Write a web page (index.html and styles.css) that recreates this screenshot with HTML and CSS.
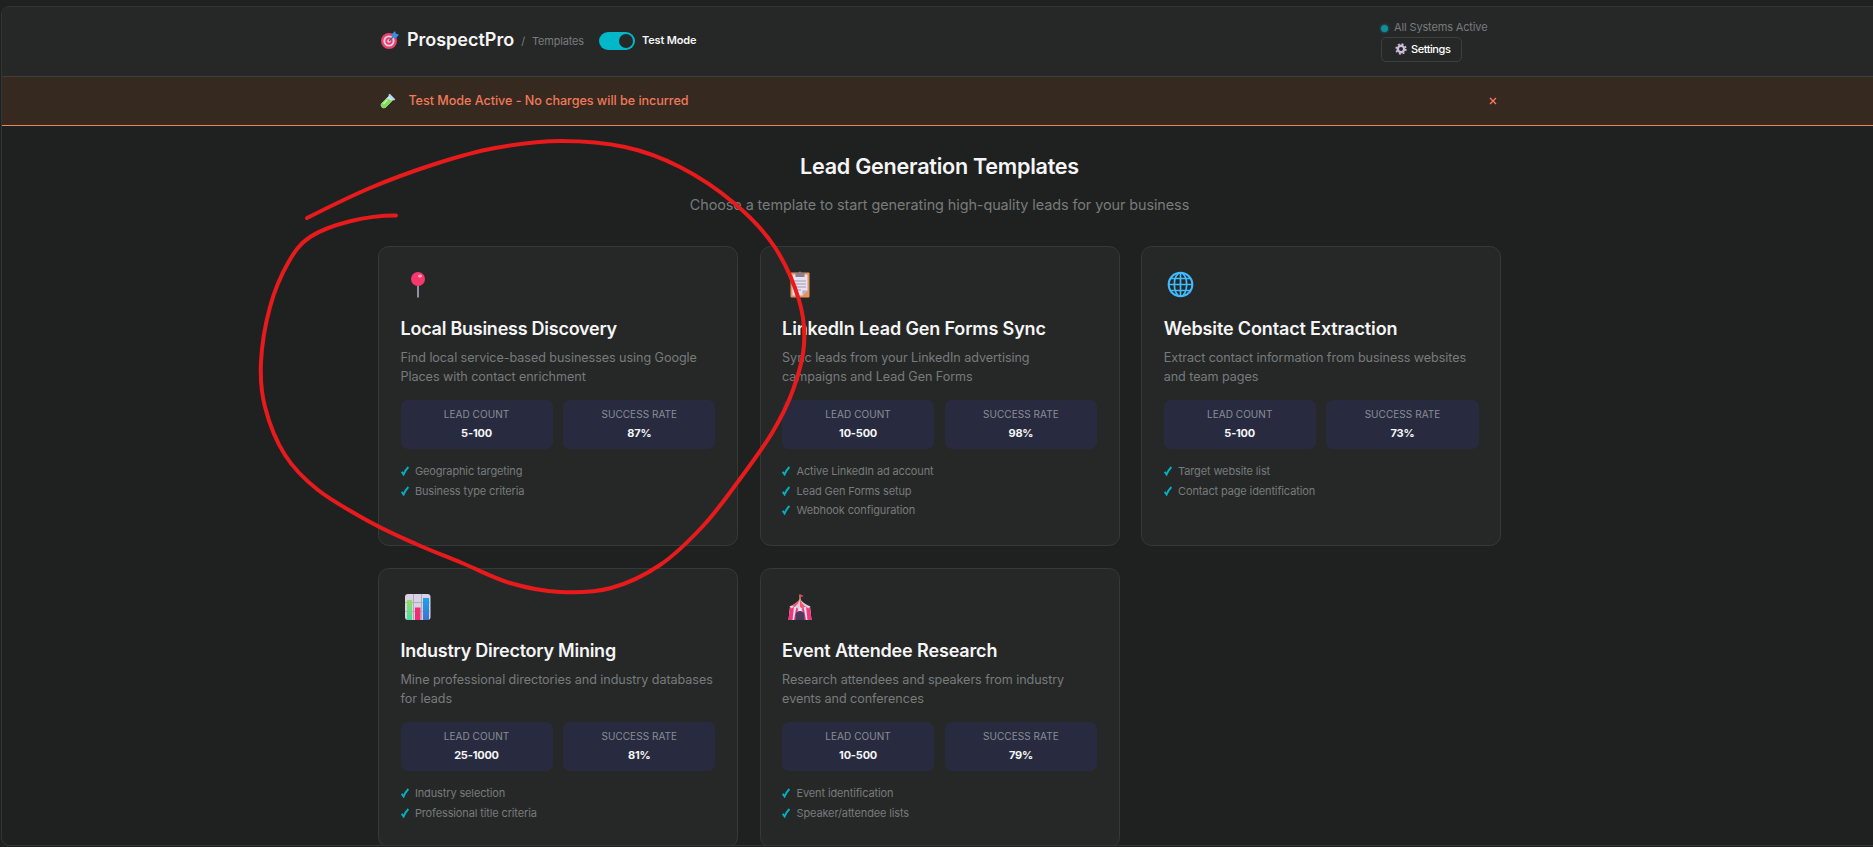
FILE: index.html
```html
<!DOCTYPE html>
<html lang="en">
<head>
<meta charset="utf-8">
<title>ProspectPro</title>
<link rel="stylesheet" href="styles.css">
</head>
<body>
<svg class="defs" width="0" height="0">
  <symbol id="check" viewBox="0 0 9 10"><path d="M.7 5.800 2.600 8.500C3.800 5.500 5.400 3 7.400 1" fill="none" stroke="#00b3c4" stroke-width="1.900"/></symbol>
</svg>
<div class="frame">
  <header class="header">
    <div class="container header-row">
      <div class="header-left">
        <svg class="logo" viewBox="0 0 18 18"><circle cx="8" cy="10" r="8" fill="#e8416f"/><circle cx="8" cy="10" r="5.600" fill="#e6cfe0"/><circle cx="8" cy="10" r="3.700" fill="#e8416f"/><circle cx="8" cy="10" r="1.800" fill="#e6cfe0"/><path d="M8 10 13 5" stroke="#50597a" stroke-width="1.200"/><path d="M11 6.500V3L14 0l.8 2.600L18 3.800 15 7Z" fill="#3391e6"/></svg>
        <span class="brand">ProspectPro</span>
        <span class="slash">/</span>
        <span class="crumb">Templates</span>
        <span class="toggle"><span class="knob"></span></span>
        <span class="mode">Test Mode</span>
      </div>
      <div class="header-right">
        <div class="status"><span class="dot"></span><span>All Systems Active</span></div>
        <button class="settings"><svg class="gear" viewBox="0 0 12 12"><circle cx="6" cy="6" r="3.200" fill="none" stroke="#cdbcd9" stroke-width="2.400"/><circle cx="6" cy="6" r="4.900" fill="none" stroke="#cdbcd9" stroke-width="1.600" stroke-dasharray="1.950 1.900"/></svg><span>Settings</span></button>
      </div>
    </div>
  </header>
  <div class="banner">
    <div class="container banner-row">
      <svg class="tube" viewBox="0 0 14 14"><path d="M8.200 1.600 12.400 5.800 5 13.200a2.900 2.900 0 0 1-4.200-4.200Z" fill="#c8e6f5"/><path d="M5.400 4.400 11.400 6.800 5 13.200a2.900 2.900 0 0 1-4.200-4.200Z" fill="#7edb5e"/><path d="M6.500 5.800 2.300 10" stroke="#d2f7a4" stroke-width="1.400"/><path d="M7.200 1 8.800-.2 14.200 5.200 13 6.800Z" fill="#b5dcf2"/></svg>
      <span class="banner-text">Test Mode Active - No charges will be incurred</span>
      <svg class="close" viewBox="0 0 8 8"><path d="m1 1 6 6M7 1 1 7" stroke="#ff7a59" stroke-width="1.300"/></svg>
    </div>
  </div>
  <main class="container main">
    <h1 class="heading">Lead Generation Templates</h1>
    <p class="sub">Choose a template to start generating high-quality leads for your business</p>
    <div class="grid">
      <article class="card">
        <svg class="icon" viewBox="0 0 36 36"><path d="M18 18v12.500" stroke="#9b8ca5" stroke-width="2"/><circle cx="18" cy="12" r="7" fill="#f8376c"/><ellipse cx="20" cy="9" rx="2" ry="1.500" fill="#ffa9c4"/></svg>
        <h2 class="title tight">Local Business Discovery</h2>
        <p class="desc">Find local service-based businesses using Google<br>Places with contact enrichment</p>
        <div class="stats">
          <div class="stat"><div class="label">LEAD COUNT</div><div class="value">5-100</div></div>
          <div class="stat"><div class="label">SUCCESS RATE</div><div class="value">87%</div></div>
        </div>
        <ul class="list">
          <li><svg class="check"><use href="#check"/></svg>Geographic targeting</li>
          <li><svg class="check"><use href="#check"/></svg>Business type criteria</li>
        </ul>
      </article>
      <article class="card">
        <svg class="icon" viewBox="0 0 36 36"><rect x="8.500" y="5.500" width="19" height="25" rx="1" fill="#e5935c"/><path d="M10.500 7.500h15v16l-5 5h-10Z" fill="#e8e1f0"/><path d="M25.500 23.500h-5v5Z" fill="#b9aac6"/><rect x="13.500" y="6" width="9" height="4" fill="#8b7f92"/><circle cx="18" cy="6" r="1.500" fill="#8b7f92"/><path d="M12 14h12M12 17h12M12 20h12M12 23h7" stroke="#a596ae"/></svg>
        <h2 class="title">LinkedIn Lead Gen Forms Sync</h2>
        <p class="desc">Sync leads from your LinkedIn advertising<br>campaigns and Lead Gen Forms</p>
        <div class="stats">
          <div class="stat"><div class="label">LEAD COUNT</div><div class="value">10-500</div></div>
          <div class="stat"><div class="label">SUCCESS RATE</div><div class="value">98%</div></div>
        </div>
        <ul class="list">
          <li><svg class="check"><use href="#check"/></svg>Active LinkedIn ad account</li>
          <li><svg class="check"><use href="#check"/></svg>Lead Gen Forms setup</li>
          <li><svg class="check"><use href="#check"/></svg>Webhook configuration</li>
        </ul>
      </article>
      <article class="card">
        <svg class="icon" viewBox="0 0 36 36"><g fill="none" stroke="#3fbcff" stroke-width="1.700"><circle cx="17.500" cy="17.500" r="11.800" stroke-width="2.100"/><ellipse cx="17.500" cy="17.500" rx="6.200" ry="11.700"/><path d="M17.500 6v23M6 17.500h23M8 11.500h19M8 23.500h19"/></g></svg>
        <h2 class="title">Website Contact Extraction</h2>
        <p class="desc">Extract contact information from business websites<br>and team pages</p>
        <div class="stats">
          <div class="stat"><div class="label">LEAD COUNT</div><div class="value">5-100</div></div>
          <div class="stat"><div class="label">SUCCESS RATE</div><div class="value">73%</div></div>
        </div>
        <ul class="list">
          <li><svg class="check"><use href="#check"/></svg>Target website list</li>
          <li><svg class="check"><use href="#check"/></svg>Contact page identification</li>
        </ul>
      </article>
      <article class="card">
        <svg class="icon" viewBox="0 0 36 36"><defs><linearGradient id="g" x2="0" y2="1"><stop stop-color="#8fdc62"/><stop offset="1" stop-color="#45dfa0"/></linearGradient><linearGradient id="b" x2="0" y2="1"><stop stop-color="#18a4f0"/><stop offset="1" stop-color="#3f73c8"/></linearGradient></defs><rect x="5" y="5" width="25.500" height="26" rx="3" fill="#dad2e2"/><path d="M5 13.500h25.500M5 22.500h25.500M13.500 5v26M21.500 5v26" stroke="#b5a9be"/><path d="M7 11h5v20H7Z" fill="url(#g)"/><path d="M15 18.500h5.500V31H15Z" fill="#ee2f72"/><path d="M23 9h6v22h-6Z" fill="url(#b)"/></svg>
        <h2 class="title tight">Industry Directory Mining</h2>
        <p class="desc">Mine professional directories and industry databases<br>for leads</p>
        <div class="stats">
          <div class="stat"><div class="label">LEAD COUNT</div><div class="value">25-1000</div></div>
          <div class="stat"><div class="label">SUCCESS RATE</div><div class="value">81%</div></div>
        </div>
        <ul class="list">
          <li><svg class="check"><use href="#check"/></svg>Industry selection</li>
          <li><svg class="check"><use href="#check"/></svg>Professional title criteria</li>
        </ul>
      </article>
      <article class="card">
        <svg class="icon" viewBox="0 0 36 36"><path d="M18 5.500v6" stroke="#f0a14d" stroke-width="1.300"/><path d="M18.500 5.500 22 7l-3.500 1.300Z" fill="#f0356d"/><path d="M8 17.500h20L29.500 31h-23Z" fill="#e7dff0"/><path d="M8 17.500h4L10.500 31h-4ZM28 17.500h-4L25.500 31h4ZM14.500 17.500h2L14 31h-2ZM21.500 17.500h-2L22 31h2Z" fill="#f0387a"/><path d="M18 10c2 3.500 6 5.500 10.500 7.500l-2 2-3-2-3 2L18 18l-2.500 1.500-3-2-3 2-2-2C12 15.500 16 13.500 18 10Z" fill="#d9cfdf"/><path d="M18 10c1 3 3 6 5.500 7.500l-3 2L18 18ZM18 10c-3 3.500-6 5.500-8 6.500l2.500 1.500c3-2 4.500-5 5.500-8Z" fill="#f8566f"/><path d="M13.500 31v-4.500a4.500 4.500 0 0 1 9 0V31Z" fill="#4c3c5c"/></svg>
        <h2 class="title">Event Attendee Research</h2>
        <p class="desc">Research attendees and speakers from industry<br>events and conferences</p>
        <div class="stats">
          <div class="stat"><div class="label">LEAD COUNT</div><div class="value">10-500</div></div>
          <div class="stat"><div class="label">SUCCESS RATE</div><div class="value">79%</div></div>
        </div>
        <ul class="list">
          <li><svg class="check"><use href="#check"/></svg>Event identification</li>
          <li><svg class="check"><use href="#check"/></svg>Speaker/attendee lists</li>
        </ul>
      </article>
    </div>
  </main>
</div>
<svg class="markup" viewBox="0 0 1873 847"><path d="M307 218S348.700 197 370 188S414.200 170.700 435 164S474 151.800 495 148S539.300 141 561 141S605.200 142.700 625 147S661.800 157.700 680 167S718.300 189.800 734 203S763.200 229.800 774 246S794 283.500 799 300S805 330 804 345S798.300 375.300 793 390S781.300 417.500 772 433S748.500 467.500 737 483S715.800 512.300 703 526S675.300 554.700 660 565S627.700 583.500 611 588S576.800 592.800 560 592S526.300 587.800 510 583S477.700 569.500 462 563S431.300 550.800 416 544S386.300 531 370 522S332.200 501.200 318 490S293.800 468.800 285 455S269 422.500 265 407S260.200 378.700 261 362S265.500 323.500 270 307S281.300 274.700 288 263S299.500 244 310 237S336.700 224.600 351 221S381 215.500 396 215.500"/></svg>
</body>
</html>
```
FILE: styles.css
```css
* {
  box-sizing: border-box;
  margin: 0;
  padding: 0;
}

body {
  height: 847px;
  padding: 6px 0 0 1px;
  overflow: hidden;
  background: #1f2120;
  color: #f5f5f5;
  font-family: Inter, "Liberation Sans", sans-serif;
}

.defs { position: absolute; }

.frame {
  width: 1877px;
  height: 840px;
  border: 1px solid #323534;
  border-radius: 8px 0 0 8px;
  overflow: hidden;
  background: #1f2120;
}

.container { width: 1123.2px; margin: 0 auto; }

/* Header */
.header {
  height: 70px;
  background: #262828;
  border-bottom: 1px solid #3d3f3f;
}
.header-row { display: flex; justify-content: space-between; }
.header-left { display: flex; align-items: center; height: 68px; padding-left: 3px; }
.logo { width: 18px; height: 18px; margin-bottom: 2px; }
.brand { margin: 0 0 4px 8px; font-size: 18px; font-weight: 600; }
.slash, .crumb {
  margin: 0 0 1px 7px;
  font-size: 11px;
  letter-spacing: -0.18px;
  color: #777b7b;
}
.toggle {
  display: flex;
  justify-content: flex-end;
  width: 36px;
  height: 18px;
  margin-left: 15px;
  padding: 2px;
  border-radius: 9px;
  background: #00b8c8;
}
.knob { width: 14px; height: 14px; border-radius: 50%; background: #262828; }
.mode { margin: 0 0 2px 7px; font-size: 11px; font-weight: 600; letter-spacing: -0.15px; }

.header-right { width: 120px; padding-top: 13px; }
.status {
  display: flex;
  align-items: center;
  font-size: 11px;
  letter-spacing: -0.15px;
  line-height: 14px;
  color: #777b7b;
}
.dot {
  width: 7px;
  height: 7px;
  margin: 2px 6px 0 0;
  border-radius: 50%;
  background: #0e8f9a;
  box-shadow: 0 0 2px 1px rgba(14, 143, 154, 0.4);
}
.settings {
  display: flex;
  align-items: center;
  gap: 4px;
  width: 81px;
  height: 25px;
  margin-top: 3px;
  padding: 0 0 1px 13px;
  border: 1px solid #3d4040;
  border-radius: 5px;
  background: none;
  color: #fff;
  font: 500 11px Inter, sans-serif;
  letter-spacing: -0.45px;
}
.gear { width: 12px; height: 12px; }

/* Test mode banner */
.banner { height: 49px; background: #36291f; border-bottom: 1px solid #e8845f; }
.banner-row { display: flex; align-items: center; height: 48px; padding-left: 3px; }
.tube { width: 14px; height: 14px; overflow: visible; }
.banner-text {
  margin: 0 0 1px 13.5px;
  font-size: 12.6px;
  font-weight: 500;
  letter-spacing: -0.04px;
  color: #f0795a;
}
.close { width: 8px; height: 8px; margin: 0 4.5px 0 auto; }

/* Page heading */
.main { padding-top: 26px; text-align: center; }
.heading { font-size: 21.6px; font-weight: 600; line-height: 28px; letter-spacing: -0.27px; }
.sub {
  margin: 14px 0 29.6px;
  font-size: 14.4px;
  line-height: 22px;
  letter-spacing: -0.07px;
  color: #777b7b;
}

/* Template cards */
.grid {
  display: grid;
  grid-template-columns: repeat(3, 1fr);
  gap: 21.6px;
  text-align: left;
}
.card {
  padding: 20.6px 21.6px 26.8px;
  border: 1px solid #363939;
  border-radius: 10.8px;
  background: #262828;
}
.icon { display: block; width: 36px; height: 36px; margin-left: -0.6px; }
.title {
  margin-top: 14px;
  font-size: 18px;
  font-weight: 600;
  line-height: 24px;
  letter-spacing: -0.14px;
}
.title.tight { letter-spacing: -0.25px; }
.desc {
  margin-top: 6.6px;
  font-size: 12.6px;
  line-height: 19px;
  letter-spacing: -0.06px;
  color: #777b7b;
  white-space: nowrap;
}
.stats {
  display: grid;
  grid-template-columns: 1fr 1fr;
  gap: 10.8px;
  margin-top: 14.4px;
  text-align: center;
}
.stat { height: 49px; padding-top: 7.2px; border-radius: 7px; background: #282b40; }
.label { font-size: 10px; line-height: 14px; letter-spacing: 0.05px; color: #8a8d93; }
.value {
  margin-top: 3.8px;
  font-size: 11px;
  font-weight: 700;
  line-height: 16px;
  letter-spacing: -0.2px;
}
.list {
  display: grid;
  gap: 3.4px;
  margin-top: 14.2px;
  list-style: none;
  font-size: 11px;
  line-height: 16px;
  letter-spacing: -0.13px;
  color: #777b7b;
}
.list li { display: flex; align-items: center; gap: 5.4px; }
.check { width: 9px; height: 10px; }

/* Hand-drawn highlight over the page */
.markup {
  position: absolute;
  top: 0;
  left: 0;
  width: 1873px;
  height: 847px;
  fill: none;
  stroke: #e81a1c;
  stroke-width: 4;
  stroke-linecap: round;
  pointer-events: none;
}
```
